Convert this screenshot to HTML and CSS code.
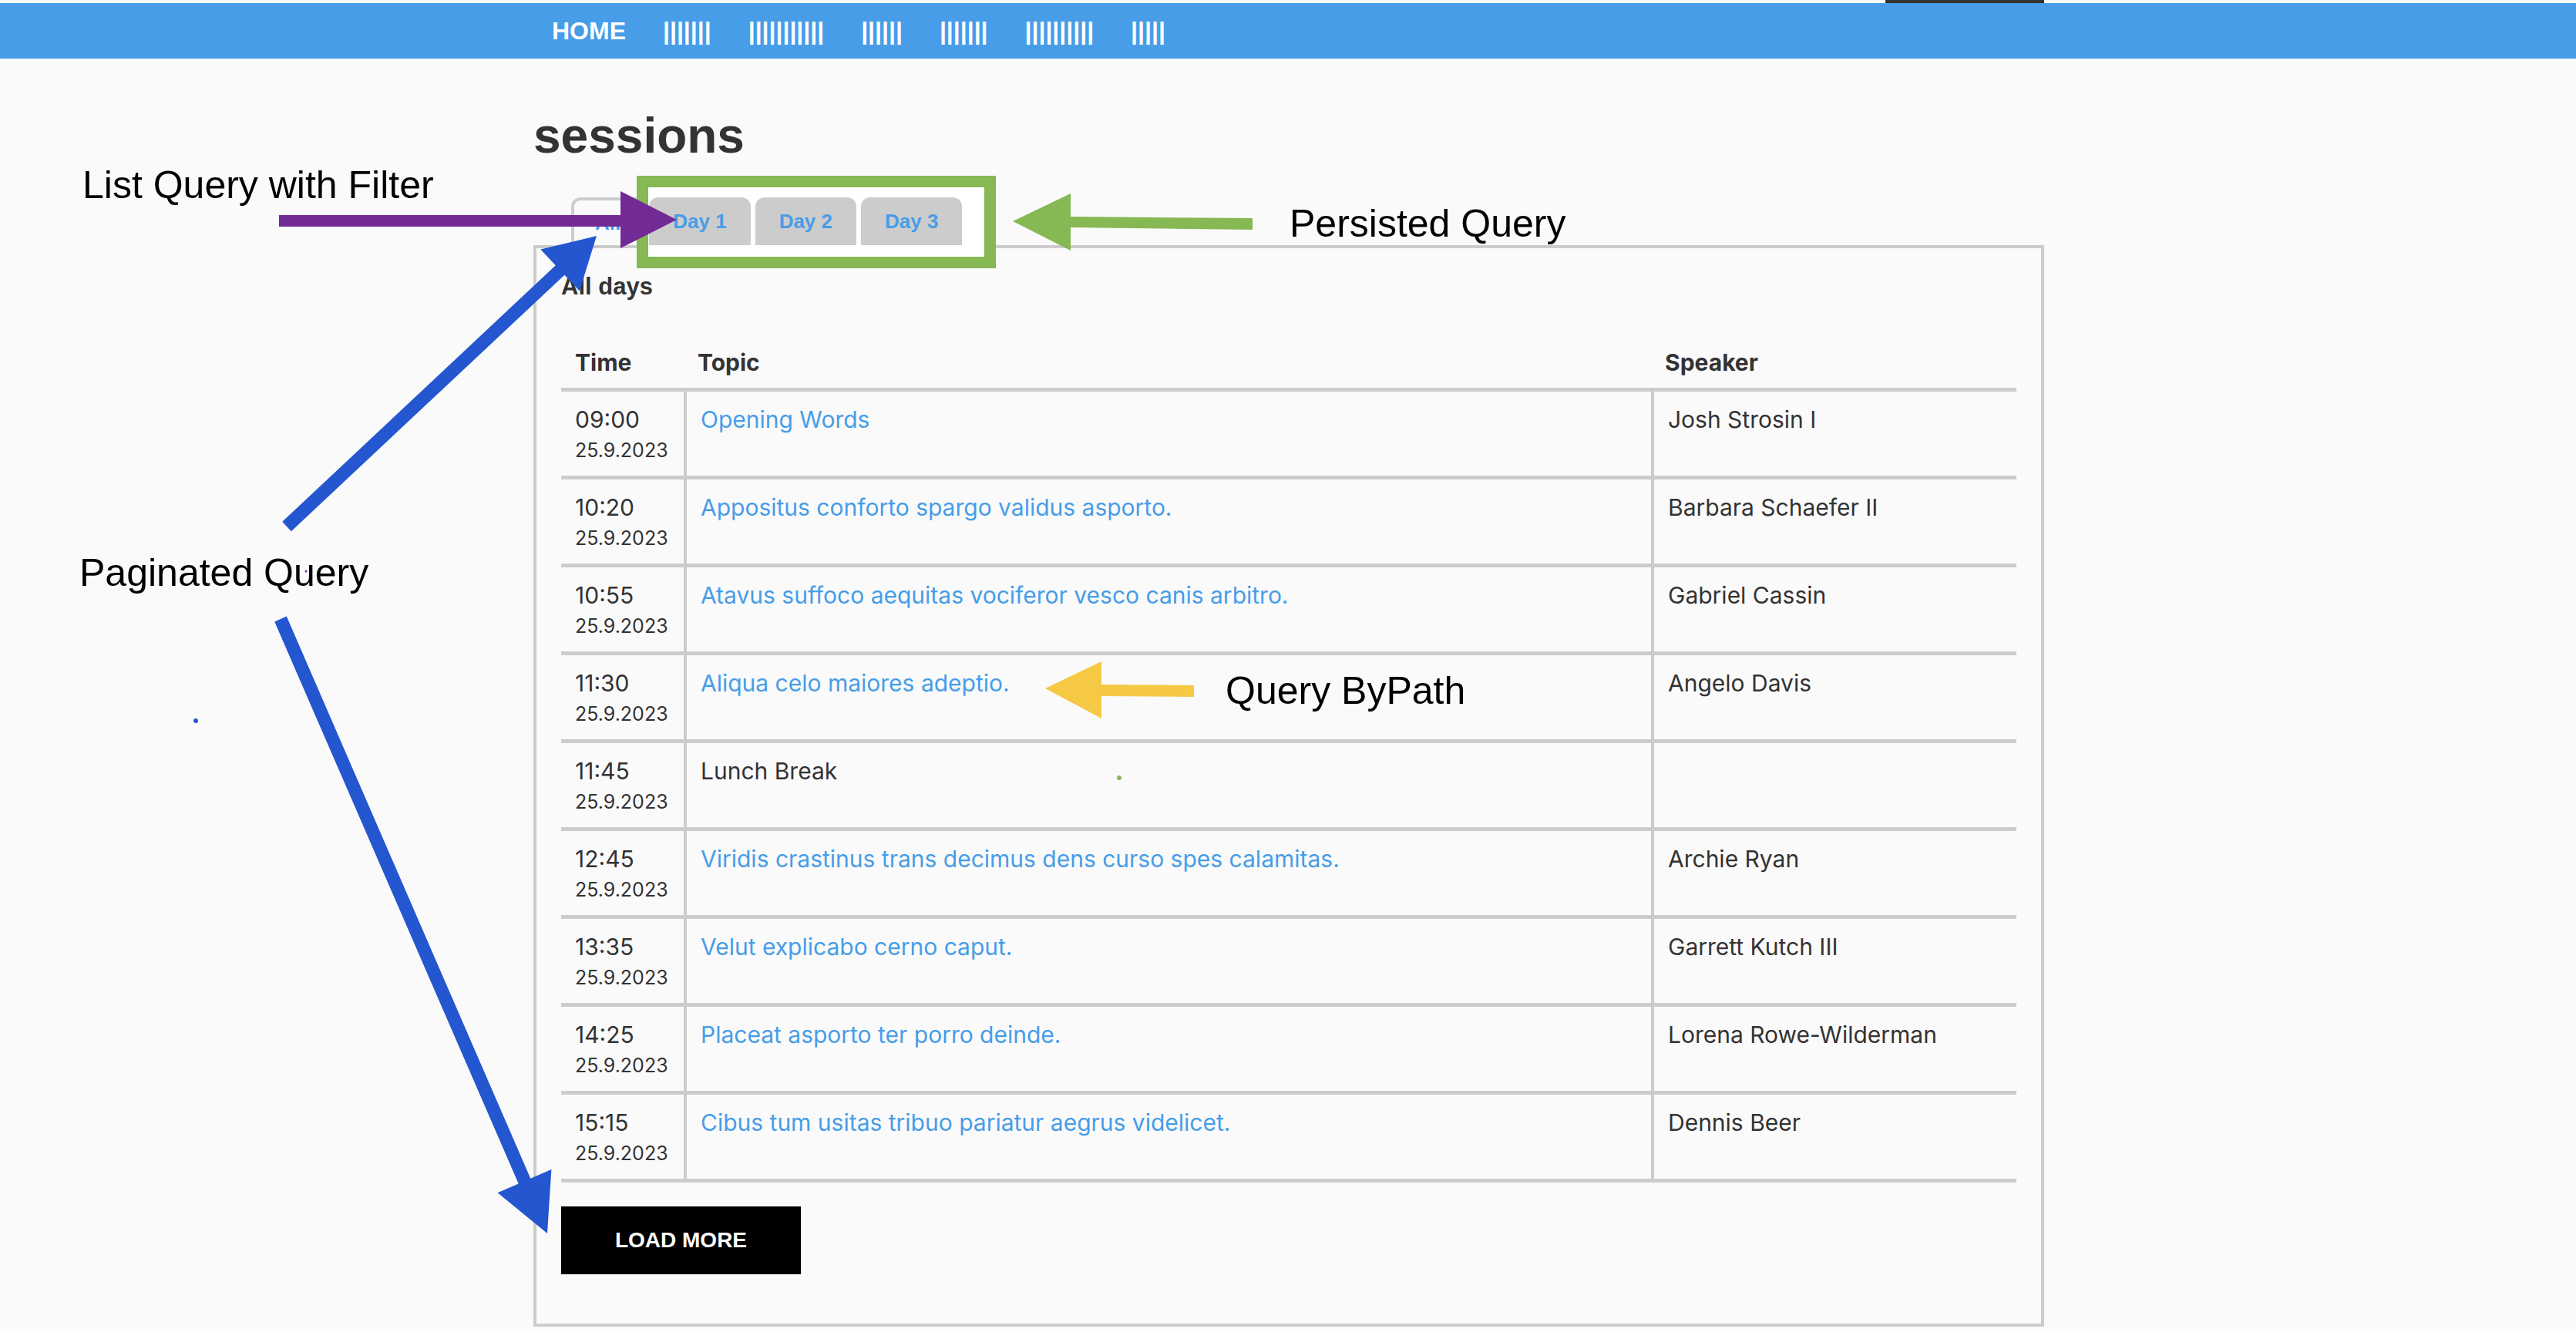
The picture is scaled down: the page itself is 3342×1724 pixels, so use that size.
FILE: index.html
```html
<!DOCTYPE html>
<html lang="en">
<head>
    <meta charset="UTF-8">
    <meta name="viewport" content="width=device-width, initial-scale=1.0">
    <title>sessions</title>
    <link rel="stylesheet" href="styles.css">
</head>
<body>

<div class="topline"><span class="topline-tab"></span></div>

<nav class="navbar">
    <a class="nav-item">HOME</a>
    <a class="nav-item">|||||||</a>
    <a class="nav-item">|||||||||||</a>
    <a class="nav-item">||||||</a>
    <a class="nav-item">|||||||</a>
    <a class="nav-item">||||||||||</a>
    <a class="nav-item">|||||</a>
</nav>

<main class="content">
    <h1 class="page-title">sessions</h1>

    <div class="tabs">
        <a class="tab active">All</a>
        <a class="tab day">Day 1</a>
        <a class="tab day">Day 2</a>
        <a class="tab day">Day 3</a>
    </div>

    <section class="panel">
        <h3 class="panel-title">All days</h3>

        <table class="sessions">
            <thead>
                <tr>
                    <th class="col-time">Time</th>
                    <th class="col-topic">Topic</th>
                    <th class="col-speaker">Speaker</th>
                </tr>
            </thead>
            <tbody>
                <tr>
                    <td class="time">09:00<span class="date">25.9.2023</span></td>
                    <td class="topic"><a>Opening Words</a></td>
                    <td class="speaker">Josh Strosin I</td>
                </tr>
                <tr>
                    <td class="time">10:20<span class="date">25.9.2023</span></td>
                    <td class="topic"><a>Appositus conforto spargo validus asporto.</a></td>
                    <td class="speaker">Barbara Schaefer II</td>
                </tr>
                <tr>
                    <td class="time">10:55<span class="date">25.9.2023</span></td>
                    <td class="topic"><a>Atavus suffoco aequitas vociferor vesco canis arbitro.</a></td>
                    <td class="speaker">Gabriel Cassin</td>
                </tr>
                <tr>
                    <td class="time">11:30<span class="date">25.9.2023</span></td>
                    <td class="topic"><a>Aliqua celo maiores adeptio.</a></td>
                    <td class="speaker">Angelo Davis</td>
                </tr>
                <tr>
                    <td class="time">11:45<span class="date">25.9.2023</span></td>
                    <td class="topic">Lunch Break</td>
                    <td class="speaker"></td>
                </tr>
                <tr>
                    <td class="time">12:45<span class="date">25.9.2023</span></td>
                    <td class="topic"><a>Viridis crastinus trans decimus dens curso spes calamitas.</a></td>
                    <td class="speaker">Archie Ryan</td>
                </tr>
                <tr>
                    <td class="time">13:35<span class="date">25.9.2023</span></td>
                    <td class="topic"><a>Velut explicabo cerno caput.</a></td>
                    <td class="speaker">Garrett Kutch III</td>
                </tr>
                <tr>
                    <td class="time">14:25<span class="date">25.9.2023</span></td>
                    <td class="topic"><a>Placeat asporto ter porro deinde.</a></td>
                    <td class="speaker">Lorena Rowe-Wilderman</td>
                </tr>
                <tr>
                    <td class="time">15:15<span class="date">25.9.2023</span></td>
                    <td class="topic"><a>Cibus tum usitas tribuo pariatur aegrus videlicet.</a></td>
                    <td class="speaker">Dennis Beer</td>
                </tr>
            </tbody>
        </table>

        <button class="load-more">LOAD MORE</button>
    </section>
</main>

<!-- annotations drawn over the page -->
<div class="green-box"></div>

<svg class="arrows" width="3342" height="1724" viewBox="0 0 3342 1724">
    <!-- list query with filter -->
    <polygon fill="#722a95" points="362,279 805,279 805,248 878,285 805,322 805,294 362,294"/>
    <!-- persisted query -->
    <polygon fill="#86b853" points="1625,283 1389,281 1389,251 1314,287 1389,325 1389,295 1625,298"/>
    <!-- query by path -->
    <polygon fill="#f5c944" points="1549,889 1429,888 1429,858 1356,893 1429,932 1429,903 1549,904"/>
    <!-- paginated query, up to the tabs -->
    <polygon fill="#2456d0" points="377.8,689.2 732.4,356.7 751.9,377.5 774,306 701.3,323.5 720.8,344.3 366.2,676.8"/>
    <!-- paginated query, down to load more -->
    <polygon fill="#2456d0" points="356.2,806.4 672.7,1535.5 645.6,1547.2 710,1600 715.4,1517 688.3,1528.7 371.8,799.6"/>
    <circle cx="254" cy="935" r="3" fill="#2456d0"/>
    <circle cx="397" cy="741" r="1.5" fill="#722a95"/>
    <circle cx="1452" cy="1009" r="3" fill="#86b853"/>
</svg>

<div class="note note-filter">List Query with Filter</div>
<div class="note note-persisted">Persisted Query</div>
<div class="note note-paginated">Paginated Query</div>
<div class="note note-bypath">Query ByPath</div>

</body>
</html>
```

FILE: styles.css
```css
body {
    margin: 0;
    background-color: #fafafa;
    font-family: 'Liberation Sans', Arial, sans-serif;
    color: #333333;
}

.topline {
    height: 4px;
    padding-left: 2446px;
}

.topline-tab {
    display: block;
    width: 206px;
    height: 4px;
    background-color: #333333;
}

/* barra azul do topo */
.navbar {
    display: flex;
    align-items: center;
    gap: 48px;
    height: 72px;
    padding-left: 716px;
    background-color: #479de8;
}

.nav-item {
    color: #ffffff;
    font-size: 32px;
    font-weight: bold;
    line-height: 72px;
    white-space: nowrap;
}

.content {
    margin-left: 692px;
    width: 1960px;
}

.page-title {
    margin: 63px 0 0 0;
    font-size: 64px;
    line-height: 74px;
    font-weight: bold;
    color: #333333;
}

.tabs {
    display: flex;
    gap: 6px;
    margin: 43px 0 0 49px;
    height: 62px;
}

.tab {
    position: relative;
    z-index: 2;
    display: flex;
    align-items: center;
    box-sizing: border-box;
    height: 62px;
    padding: 0 31px;
    font-size: 26px;
    font-weight: bold;
    color: #479de8;
    border-radius: 12px 12px 0 0;
}

.tab.day {
    background-color: #cccccc;
}

.tab.active {
    z-index: 0;
    padding: 0 27px;
    border: 4px solid #cccccc;
    border-bottom: none;
    background-color: #fafafa;
}

.panel {
    box-sizing: border-box;
    width: 1960px;
    border: 4px solid #cccccc;
    padding: 32px 32px 64px;
}

.panel-title {
    margin: 0;
    font-size: 31px;
    line-height: 35px;
    font-weight: bold;
    color: #333333;
}

/* tabela das sessões */
.sessions {
    width: 100%;
    margin-top: 48px;
    border-collapse: separate;
    border-spacing: 0;
    table-layout: fixed;
    font-family: Inter, 'Noto Sans', sans-serif;
    font-size: 30px;
    color: #333333;
}

.sessions th,
.sessions td {
    box-sizing: border-box;
    text-align: left;
    vertical-align: top;
    border-bottom: 5px solid #cccccc;
}

.sessions th {
    padding: 12px 18px;
    line-height: 42px;
    font-weight: bold;
}

.col-time {
    width: 159px;
}

.col-speaker {
    width: 474px;
}

.sessions td {
    padding: 15px 18px 14px;
    line-height: 42px;
}

.sessions td.topic,
.sessions td.speaker {
    border-left: 4px solid #cccccc;
}

.date {
    display: block;
    font-size: 25px;
    line-height: 38px;
}

.topic a {
    color: #479de8;
    text-decoration: none;
}

.load-more {
    display: block;
    width: 311px;
    height: 88px;
    margin-top: 31px;
    border: none;
    background-color: #000000;
    color: #ffffff;
    font-family: 'Liberation Sans', Arial, sans-serif;
    font-size: 28px;
    font-weight: bold;
    cursor: pointer;
}

/* anotações por cima da página */
.green-box {
    position: absolute;
    z-index: 1;
    left: 826px;
    top: 228px;
    box-sizing: border-box;
    width: 466px;
    height: 120px;
    border: 15px solid #86b853;
    background-color: #ffffff;
}

.arrows {
    position: absolute;
    z-index: 3;
    left: 0;
    top: 0;
    pointer-events: none;
}

.note {
    position: absolute;
    z-index: 3;
    font-family: 'Liberation Sans', Arial, sans-serif;
    font-size: 50px;
    line-height: 50px;
    color: #000000;
    white-space: nowrap;
}

.note-filter {
    left: 107px;
    top: 215px;
}

.note-persisted {
    left: 1673px;
    top: 265px;
}

.note-paginated {
    left: 103px;
    top: 718px;
}

.note-bypath {
    left: 1590px;
    top: 871px;
}
```
